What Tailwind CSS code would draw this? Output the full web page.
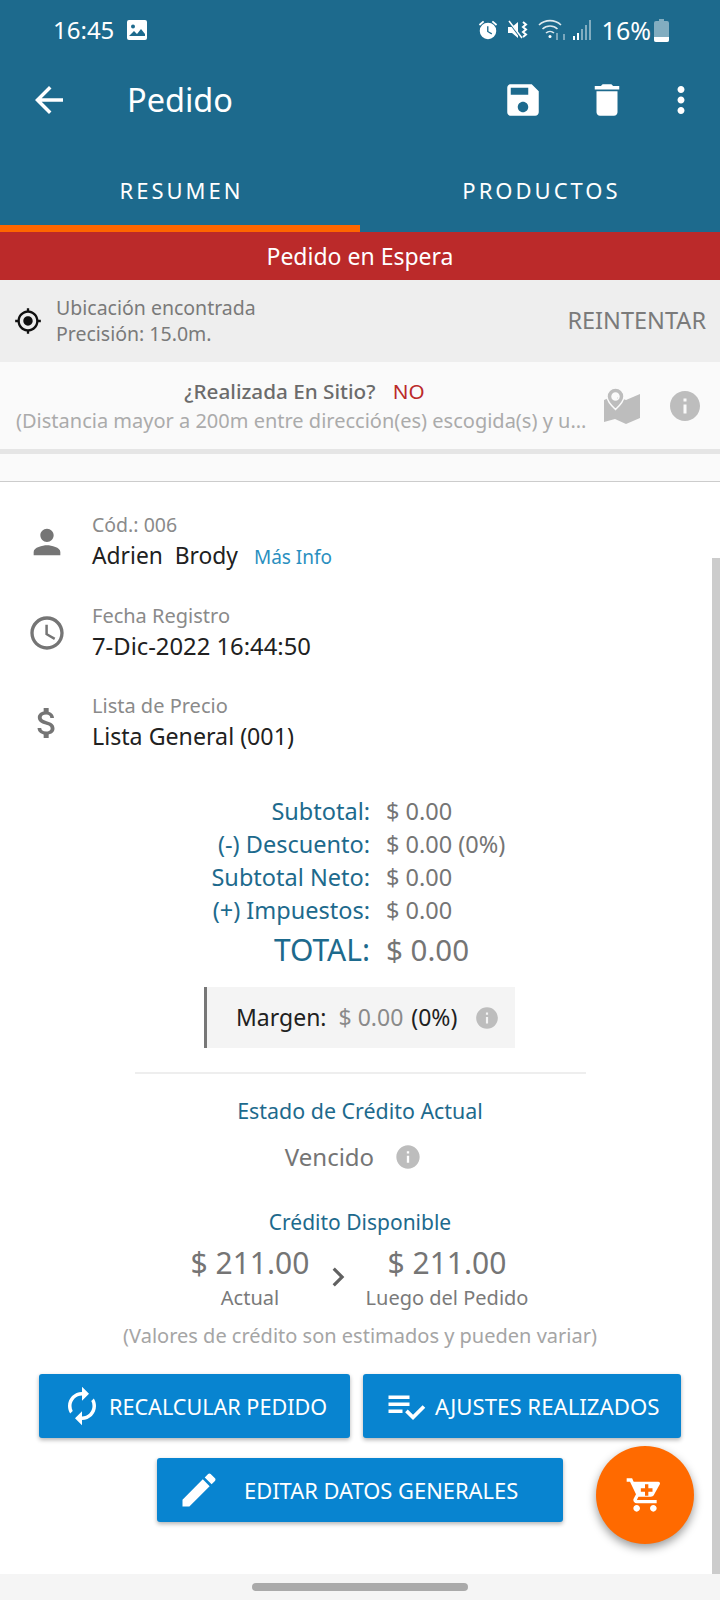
<!DOCTYPE html>
<html lang="es">
<head>
    <meta charset="UTF-8">
    <meta name="viewport" content="width=device-width, initial-scale=1.0">
    <title>Pedido</title>
    <script src="https://cdn.jsdelivr.net/npm/@tailwindcss/browser@4"></script>
</head>
<body class="bg-white">
    <div class="relative w-[720px] h-[1600px] overflow-hidden bg-white flex flex-col font-['Noto_Sans',sans-serif]">

        <!-- Status bar + toolbar + tabs -->
        <div class="h-[232px] shrink-0 bg-[#1d6a8d] text-white flex flex-col">
            <div class="h-[60px] flex items-center pl-[53px] pr-[51px]">
                <span class="text-[24px] leading-none">16:45</span>
                <svg class="ml-[13px] w-[20px] h-[20px]" viewBox="0 0 20 20"><rect width="20" height="20" rx="2" fill="#fff"/><circle cx="6" cy="6.5" r="2" fill="#1d6a8d"/><path d="M2 16l5-5 3 3 4-5 4 5v2H2z" fill="#1d6a8d"/></svg>
                <div class="ml-auto flex items-center">
                    <svg class="-ml-[2px] w-[22px] h-[22px]" viewBox="0 0 24 24" fill="#fff"><path d="M22 5.72l-4.6-3.86-1.29 1.53 4.6 3.86L22 5.72zM7.88 3.39L6.6 1.86 2 5.71l1.29 1.53 4.59-3.85z"/><path fill-rule="evenodd" d="M12 4a9 9 0 100 18 9 9 0 000-18zm-1 4h1.5v5.25l4 2.37-.75 1.23L11 14V8z"/></svg>
                    <svg class="ml-[8px] w-[22px] h-[22px]" viewBox="0 0 22 22" fill="#fff"><path d="M1 8h4l6-5v16l-6-5H1z"/><path d="M2 3l12 16" stroke="#1d6a8d" stroke-width="2"/><path d="M2 2l13 17" stroke="#fff" stroke-width="1.5"/><path d="M16 3l3 2.500-3 2.500 3 2.500-3 2.500 3 2.500-3 2.500" fill="none" stroke="#fff" stroke-width="2"/></svg>
                    <svg class="ml-[9px] w-[30px] h-[24px]" viewBox="0 0 30 24" fill="none" stroke="#fff" stroke-opacity=".85" stroke-width="1.6"><path d="M1 7a16 16 0 0122 0"/><path d="M4.500 11a11 11 0 0115 0"/><path d="M8 15a6 6 0 018 0"/><circle cx="12" cy="18.500" r="1.500" fill="#fff" stroke="none"/><path d="M19 15v7M26 22v-6" stroke="#fff" stroke-opacity=".55" stroke-width="1.500"/></svg>
                    <svg class="ml-[5px] w-[18px] h-[20px]" viewBox="0 0 18 20" fill="#fff"><rect x="0" y="16" width="2" height="4"/><rect x="4" y="13" width="2" height="7"/><rect x="8" y="9" width="2" height="11" opacity=".45"/><rect x="12" y="5" width="2" height="15" opacity=".45"/><rect x="16" y="0" width="2" height="20" opacity=".45"/></svg>
                    <span class="ml-[11px] text-[25px] leading-none">16%</span>
                    <svg class="ml-[3px] w-[15px] h-[23px]" viewBox="0 0 15 23" fill="#fff"><path d="M5 0h5v2h3a2 2 0 012 2v17a2 2 0 01-2 2H2a2 2 0 01-2-2V4a2 2 0 012-2h3z" opacity=".45"/><path d="M0 18h15v3a2 2 0 01-2 2H2a2 2 0 01-2-2z"/></svg>
                </div>
            </div>
            <div class="h-[80px] flex items-center pl-[28px]">
                <svg class="w-[42px] h-[42px]" viewBox="0 0 24 24" fill="#fff"><path d="M20 11H7.830l5.590-5.590L12 4l-8 8 8 8 1.410-1.410L7.830 13H20v-2z"/></svg>
                <span class="ml-[57px] text-[32.500px] leading-none">Pedido</span>
                <div class="ml-auto flex items-center">
                    <svg class="w-[42px] h-[42px]" viewBox="0 0 24 24" fill="#fff"><path d="M17 3H5c-1.110 0-2 .9-2 2v14c0 1.100.89 2 2 2h14c1.100 0 2-.9 2-2V7l-4-4zm-5 16c-1.660 0-3-1.340-3-3s1.340-3 3-3 3 1.340 3 3-1.340 3-3 3zm3-10H5V5h10v4z"/></svg>
                    <svg class="ml-[42px] w-[42px] h-[42px]" viewBox="0 0 24 24" fill="#fff"><path d="M6 19c0 1.100.9 2 2 2h8c1.100 0 2-.9 2-2V7H6v12zM19 4h-3.500l-1-1h-5l-1 1H5v2h14V4z"/></svg>
                    <svg class="ml-[32px] mr-[18px] w-[42px] h-[42px]" viewBox="0 0 24 24" fill="#fff"><path d="M12 8c1.100 0 2-.9 2-2s-.9-2-2-2-2 .9-2 2 .9 2 2 2zm0 2c-1.100 0-2 .9-2 2s.9 2 2 2 2-.9 2-2-.9-2-2-2zm0 6c-1.100 0-2 .9-2 2s.9 2 2 2 2-.9 2-2-.9-2-2-2z"/></svg>
                </div>
            </div>
            <div class="flex-1 flex">
                <div class="w-1/2 flex flex-col">
                    <div class="flex-1 flex items-center justify-center text-[22px] tracking-[3px] pt-[16px] pl-[3px]">RESUMEN</div>
                    <div class="h-[7px] bg-[#ff6600]"></div>
                </div>
                <div class="w-1/2 flex flex-col">
                    <div class="flex-1 flex items-center justify-center text-[22px] tracking-[3px] pt-[16px] pl-[3px]">PRODUCTOS</div>
                    <div class="h-[7px]"></div>
                </div>
            </div>
        </div>

        <div class="h-[48px] shrink-0 bg-[#bb2a2a] text-white flex items-center justify-center text-[23px]">Pedido en Espera</div>

        <!-- Ubicacion -->
        <div class="h-[82px] shrink-0 bg-[#eeeeee] flex items-center pl-[14px] pr-[14px]">
            <svg class="w-[28px] h-[28px]" viewBox="0 0 24 24" fill="#111"><path d="M12 8c-2.210 0-4 1.790-4 4s1.790 4 4 4 4-1.790 4-4-1.790-4-4-4zm8.940 3c-.46-4.170-3.770-7.480-7.940-7.940V1h-2v2.060C6.830 3.520 3.520 6.830 3.060 11H1v2h2.060c.46 4.170 3.770 7.480 7.940 7.940V23h2v-2.060c4.170-.46 7.480-3.770 7.940-7.940H23v-2h-2.060zM12 19c-3.870 0-7-3.130-7-7s3.130-7 7-7 7 3.130 7 7-3.130 7-7 7z"/></svg>
            <div class="ml-[14px] text-[19.500px] leading-[26px] text-[#7a7a7a]">
                <div>Ubicación encontrada</div>
                <div>Precisión: 15.0m.</div>
            </div>
            <span class="ml-auto text-[23.500px] text-[#7a7a7a]">REINTENTAR</span>
        </div>

        <!-- En sitio -->
        <div class="h-[87px] shrink-0 bg-[#fafafa] flex items-center">
            <div class="ml-[16px] w-[570px] text-center">
                <div class="pl-[7px] text-[20.700px] leading-[29px] text-[#6b6b6b] font-medium">¿Realizada En Sitio? <span class="ml-[12px] font-normal text-[#bb2a2a]">NO</span></div>
                <div class="text-[20px] leading-[29px] text-[#ababab] whitespace-nowrap">(Distancia mayor a 200m entre dirección(es) escogida(s) y u...</div>
            </div>
            <svg class="ml-[18px] w-[36px] h-[36px]" viewBox="0 0 36 36" fill="#bdbdbd"><path d="M0 14l7-3 3 7 4-7 0 0 8 3 14-6v24l-14 6-11-5-11 3z" transform="translate(0 -2)"/><path fill-rule="evenodd" d="M11.500 0a8.500 8.500 0 018.500 8.500c0 5-8.500 13-8.500 13S3 13.500 3 8.500A8.500 8.500 0 0111.500 0zm0 5a3.500 3.500 0 100 7 3.500 3.500 0 000-7z" stroke="#fafafa" stroke-width="1.500"/></svg>
            <svg class="ml-[27px] w-[36px] h-[36px]" viewBox="0 0 24 24" fill="#bdbdbd"><path d="M12 2C6.480 2 2 6.480 2 12s4.480 10 10 10 10-4.480 10-10S17.520 2 12 2zm1 15h-2v-6h2v6zm0-8h-2V7h2v2z"/></svg>
        </div>
        <div class="h-[5px] shrink-0 bg-[#e5e5e5]"></div>
        <div class="h-[28px] shrink-0 bg-[#fafafa] border-b border-[#cccccc]"></div>

        <!-- Datos del pedido -->
        <div class="flex-1 flex flex-col pt-[14px]">
            <div class="h-[90px] flex items-center">
                <svg class="ml-[27px] mt-[1px] w-[40px] h-[40px]" viewBox="0 0 24 24" fill="#757575"><path d="M12 12c2.210 0 4-1.790 4-4s-1.790-4-4-4-4 1.790-4 4 1.790 4 4 4zm0 2c-2.670 0-8 1.340-8 4v2h16v-2c0-2.660-5.330-4-8-4z"/></svg>
                <div class="ml-[25px]">
                    <div class="text-[19.500px] leading-[31px] text-[#8a8a8a]">Cód.: 006</div>
                    <div class="text-[22.800px] leading-[31px] text-[#212121] whitespace-pre">Adrien  Brody<span class="ml-[16px] text-[19px] text-[#2a8fc0]">Más Info</span></div>
                </div>
            </div>
            <div class="h-[90px] flex items-center">
                <svg class="ml-[27px] mt-[4px] w-[40px] h-[40px]" viewBox="0 0 24 24" fill="#757575"><path d="M11.990 2C6.470 2 2 6.480 2 12s4.470 10 9.990 10C17.520 22 22 17.520 22 12S17.520 2 11.990 2zM12 20c-4.420 0-8-3.580-8-8s3.580-8 8-8 8 3.580 8 8-3.580 8-8 8zm.5-13H11v6l5.250 3.150.75-1.230-4.500-2.670z"/></svg>
                <div class="ml-[25px]">
                    <div class="text-[20px] leading-[31px] text-[#8a8a8a]">Fecha Registro</div>
                    <div class="text-[23.800px] leading-[31px] text-[#212121]">7-Dic-2022 16:44:50</div>
                </div>
            </div>
            <div class="h-[90px] flex items-center">
                <svg class="ml-[27px] mt-[4px] w-[40px] h-[40px]" viewBox="0 0 24 24" fill="#757575"><path d="M11.800 10.900c-2.270-.59-3-1.200-3-2.150 0-1.090 1.010-1.850 2.700-1.850 1.780 0 2.440.85 2.500 2.100h2.210c-.07-1.720-1.120-3.300-3.210-3.810V3h-3v2.160c-1.940.42-3.500 1.680-3.500 3.610 0 2.310 1.910 3.460 4.700 4.130 2.500.6 3 1.480 3 2.410 0 .69-.49 1.790-2.700 1.790-2.060 0-2.870-.92-2.980-2.100h-2.200c.12 2.190 1.760 3.420 3.680 3.830V21h3v-2.150c1.950-.37 3.500-1.500 3.500-3.550 0-2.840-2.430-3.810-4.700-4.400z"/></svg>
                <div class="ml-[25px]">
                    <div class="text-[20px] leading-[31px] text-[#8a8a8a]">Lista de Precio</div>
                    <div class="text-[23.200px] leading-[31px] text-[#212121]">Lista General (001)</div>
                </div>
            </div>

            <!-- Totales -->
            <div class="mt-[29px] flex flex-col text-[23.500px] leading-[33px]">
                <div class="flex"><span class="w-[370px] text-right text-[#1d6a8d]">Subtotal:</span><span class="ml-[16px] text-[#757575]">$ 0.00</span></div>
                <div class="flex"><span class="w-[370px] text-right text-[#1d6a8d]">(-) Descuento:</span><span class="ml-[16px] text-[#757575]">$ 0.00 (0%)</span></div>
                <div class="flex"><span class="w-[370px] text-right text-[#1d6a8d]">Subtotal Neto:</span><span class="ml-[16px] text-[#757575]">$ 0.00</span></div>
                <div class="flex"><span class="w-[370px] text-right text-[#1d6a8d]">(+) Impuestos:</span><span class="ml-[16px] text-[#757575]">$ 0.00</span></div>
                <div class="flex text-[30px] leading-[45px]"><span class="w-[370px] text-right text-[#1d6a8d]">TOTAL:</span><span class="ml-[16px] text-[29.500px] text-[#757575]">$ 0.00</span></div>
            </div>

            <div class="mt-[15px] ml-[204px] w-[311px] h-[61px] bg-[#f4f4f4] border-l-[3px] border-[#777777] flex items-center pl-[29px] text-[23px]">
                <span class="text-[#212121]">Margen:</span>
                <span class="ml-[12px] text-[#8a8a8a]">$ 0.00</span>
                <span class="ml-[8px] text-[#212121]">(0%)</span>
                <svg class="ml-[17px] w-[26px] h-[26px]" viewBox="0 0 24 24" fill="#bdbdbd"><path d="M12 2C6.480 2 2 6.480 2 12s4.480 10 10 10 10-4.480 10-10S17.520 2 12 2zm1 15h-2v-6h2v6zm0-8h-2V7h2v2z"/></svg>
            </div>

            <div class="mt-[24px] ml-[135px] w-[451px] h-[2px] bg-[#eeeeee]"></div>

            <!-- Credito -->
            <div class="mt-[23px] text-center text-[21.400px] leading-[28px] text-[#1d6a8d]">Estado de Crédito Actual</div>
            <div class="mt-[14px] h-[36px] flex items-center justify-center pr-[13px] text-[24px] text-[#757575]">
                <span>Vencido</span>
                <svg class="ml-[20px] w-[28px] h-[28px]" viewBox="0 0 24 24" fill="#bdbdbd"><path d="M12 2C6.480 2 2 6.480 2 12s4.480 10 10 10 10-4.480 10-10S17.520 2 12 2zm1 15h-2v-6h2v6zm0-8h-2V7h2v2z"/></svg>
            </div>
            <div class="mt-[33px] text-center text-[21px] leading-[28px] text-[#1d6a8d]">Crédito Disponible</div>
            <div class="mt-[6px] ml-[160px] flex items-center">
                <div class="w-[180px] text-center">
                    <div class="text-[30px] leading-[42px] text-[#757575]">$ 211.00</div>
                    <div class="text-[20px] leading-[28px] text-[#7a7a7a]">Actual</div>
                </div>
                <svg class="-ml-[21px] w-[38px] h-[38px]" viewBox="0 0 24 24" fill="#616161"><path d="M10 6L8.590 7.410 13.170 12l-4.580 4.590L10 18l6-6z"/></svg>
                <div class="w-[180px] text-center">
                    <div class="text-[30px] leading-[42px] text-[#757575]">$ 211.00</div>
                    <div class="text-[20px] leading-[28px] text-[#7a7a7a]">Luego del Pedido</div>
                </div>
            </div>
            <div class="mt-[10px] text-center text-[20px] leading-[28px] text-[#a5a5a5]">(Valores de crédito son estimados y pueden variar)</div>

            <!-- Botones -->
            <div class="mt-[24px] flex justify-center pr-[0px] gap-[13px]">
                <div class="w-[311px] h-[64px] rounded-[3px] bg-[#0884d0] shadow-[0_2px_4px_rgba(0,0,0,0.3)] flex items-center pl-[22px] text-white text-[21.600px]">
                    <svg class="w-[42px] h-[42px]" viewBox="0 0 24 24" fill="#fff"><path d="M12 6v3l4-4-4-4v3c-4.420 0-8 3.580-8 8 0 1.570.46 3.030 1.240 4.260L6.700 14.800c-.45-.83-.7-1.790-.7-2.800 0-3.310 2.690-6 6-6zm6.760 1.740L17.300 9.200c.44.84.7 1.790.7 2.800 0 3.310-2.690 6-6 6v-3l-4 4 4 4v-3c4.420 0 8-3.580 8-8 0-1.570-.46-3.030-1.240-4.260z"/></svg>
                    <span class="ml-[6px] mt-[2px] whitespace-nowrap">RECALCULAR PEDIDO</span>
                </div>
                <div class="w-[318px] h-[64px] rounded-[3px] bg-[#0884d0] shadow-[0_2px_4px_rgba(0,0,0,0.3)] flex items-center pl-[22px] text-white text-[22.200px]">
                    <svg class="w-[42px] h-[42px]" viewBox="0 0 24 24" fill="#fff"><path d="M14 10H2v2h12v-2zm0-4H2v2h12V6zM2 16h8v-2H2v2zm19.500-4.500L23 13l-6.990 7-4.510-4.500L13 14l3.010 3 5.490-5.500z"/></svg>
                    <span class="ml-[8px] mt-[2px] whitespace-nowrap">AJUSTES REALIZADOS</span>
                </div>
            </div>
            <div class="mt-[20px] ml-[157px] w-[406px] h-[64px] rounded-[3px] bg-[#0884d0] shadow-[0_2px_4px_rgba(0,0,0,0.3)] flex items-center pl-[20px] text-white text-[21.900px]">
                <svg class="w-[44px] h-[44px]" viewBox="0 0 24 24" fill="#fff"><path d="M3 17.250V21h3.750L17.810 9.940l-3.750-3.750L3 17.250zM20.710 7.040c.39-.39.39-1.020 0-1.410l-2.340-2.340c-.39-.39-1.020-.39-1.410 0l-1.830 1.830 3.750 3.750 1.830-1.830z"/></svg>
                <span class="ml-[23px] mt-[2px] whitespace-nowrap">EDITAR DATOS GENERALES</span>
            </div>
        </div>

        <!-- Barra inferior -->
        <div class="h-[26px] shrink-0 bg-[#f5f5f5] flex items-center justify-center">
            <div class="w-[216px] h-[8px] rounded-full bg-[#aaaaaa]"></div>
        </div>

        <!-- Scrollbar y boton flotante -->
        <div class="absolute right-0 top-[558px] w-[8px] h-[1016px] bg-[#cccccc]"></div>
        <div class="absolute left-[596px] top-[1446px] w-[98px] h-[98px] rounded-full bg-[#ff6a00] shadow-[0_4px_10px_rgba(0,0,0,0.4)] flex items-center justify-center">
            <svg class="w-[40px] h-[40px]" viewBox="0 0 24 24"><path fill="#fff" d="M7 18c-1.100 0-1.990.9-1.990 2S5.900 22 7 22s2-.9 2-2-.9-2-2-2zM1 2v2h2l3.600 7.590-1.350 2.450c-.16.28-.25.61-.25.96 0 1.100.9 2 2 2h12v-2H7.420c-.14 0-.25-.11-.25-.25l.03-.12.9-1.630h7.450c.75 0 1.410-.41 1.750-1.030l3.580-6.490c.08-.14.12-.31.12-.48 0-.55-.45-1-1-1H5.210l-.94-2H1zm16 16c-1.100 0-1.990.9-1.990 2s.89 2 1.990 2 2-.9 2-2-.9-2-2-2z"/><path fill="#ff6a00" d="M12 5.500h2v2.500h2.500v2H14v2.500h-2V10H9.500V8H12z"/></svg>
        </div>
    </div>
</body>
</html>
